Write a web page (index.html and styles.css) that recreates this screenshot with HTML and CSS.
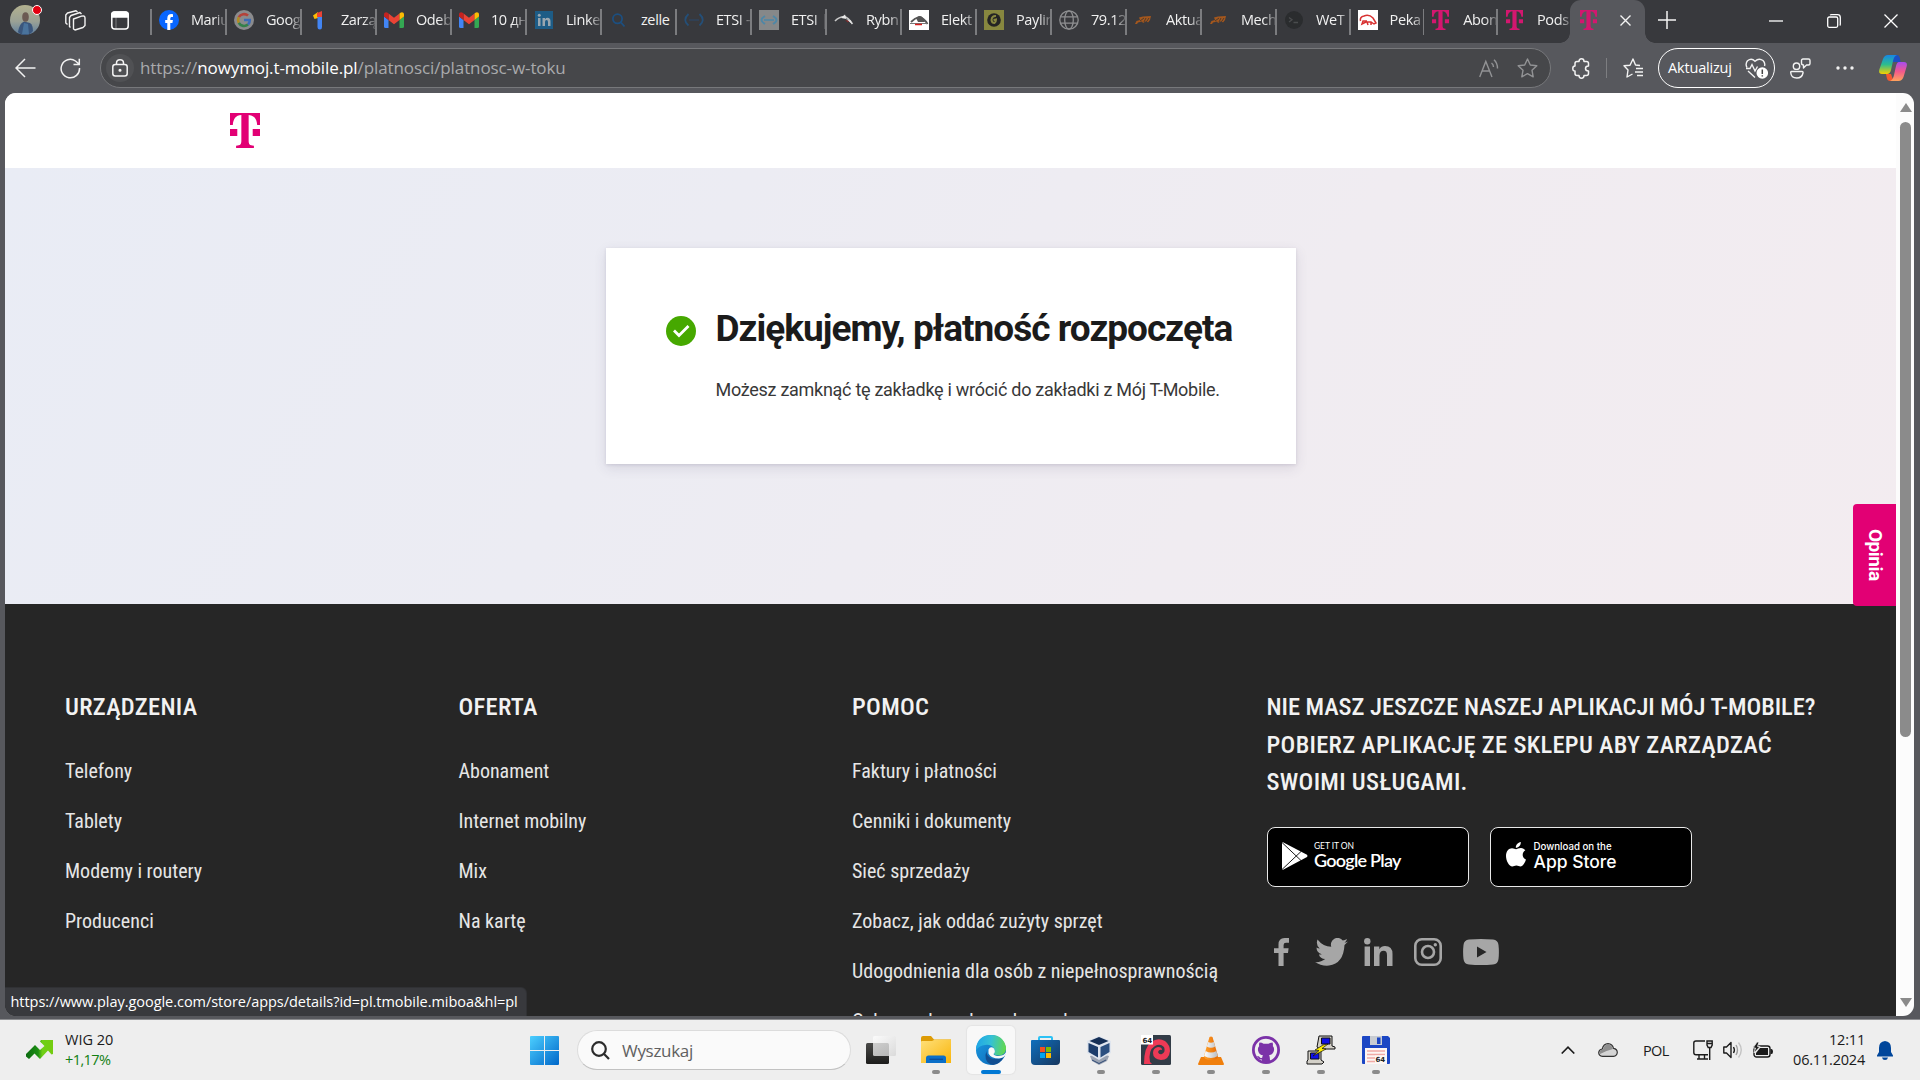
FILE: index.html
```html
<!DOCTYPE html>
<html lang="pl">
<head>
<meta charset="utf-8">
<title>Mój T-Mobile – płatność w toku</title>
<link rel="stylesheet" href="styles.css">
</head>
<body>
<svg class="defs" aria-hidden="true">
  <defs>
    <symbol id="tlogo" viewBox="0 0 74 105" preserveAspectRatio="none"><path d="M0 0H74V36H67C66 18 60 7 46 6V82C46 94 48 98 59 98V105H15V98C26 98 28 94 28 82V6C14 7 8 18 7 36H0ZM0 48H18V69H0ZM56 48H74V69H56Z"/></symbol>
    <symbol id="gmail" viewBox="0 0 20 16"><path fill="#4285f4" d="M1.5 16H4.5V8L0 4.5V14.5Q0 16 1.5 16Z"/><path fill="#34a853" d="M15.500 16H18.500Q20 16 20 14.500V4.500L15.500 8Z"/><path fill="#ea4335" d="M4.500 8V1.500L10 5.700 15.500 1.500V8L10 12.200Z"/><path fill="#c5221f" d="M0 2.500V4.500L4.500 8V1.500L3.600.8C2 -.4 0 .6 0 2.500Z"/><path fill="#fbbc04" d="M20 2.500V4.500L15.500 8V1.500L16.400.8C18 -.4 20 .6 20 2.500Z"/></symbol>
    <symbol id="ikar" viewBox="0 0 20 12"><path fill="#a4571d" d="M5 3.500L9 2.500 17 2 16 6 14 8.500 12.500 7 9 9 8 7.500 4 8.500 3 10H1L2.500 7 6 6Z"/><path stroke="#4d3a2c" stroke-width="1" d="M6 7L10 4M10 8L12 4M13 7L15 4"/></symbol>
    <linearGradient id="win" x1="0" y1="0" x2="1" y2="1"><stop offset="0" stop-color="#4ccfff"/><stop offset="1" stop-color="#0067c9"/></linearGradient>
    <linearGradient id="fold" x1="0" y1="0" x2="1" y2="1"><stop offset="0" stop-color="#ffe07a"/><stop offset="1" stop-color="#f9b50b"/></linearGradient>
    <linearGradient id="tv1" x1="0" y1="0" x2="0" y2="1"><stop offset="0" stop-color="#4a4a48"/><stop offset="1" stop-color="#1c1c1b"/></linearGradient>
    <linearGradient id="tv2" x1="0" y1="0" x2="1" y2="1"><stop offset="0" stop-color="#fff" stop-opacity=".75"/><stop offset="1" stop-color="#d5d5d5" stop-opacity=".8"/></linearGradient>
    <linearGradient id="edgeA" x1="0" y1=".3" x2="1" y2=".4"><stop offset="0" stop-color="#1fa5e8"/><stop offset=".5" stop-color="#35c1d4"/><stop offset="1" stop-color="#62d84e"/></linearGradient>
    <linearGradient id="edgeB" x1="0" y1="0" x2="1" y2="1"><stop offset="0" stop-color="#1b9de2"/><stop offset="1" stop-color="#0b62b4"/></linearGradient>
    <linearGradient id="store" x1="0" y1="0" x2="1" y2="1"><stop offset="0" stop-color="#0f6fbd"/><stop offset="1" stop-color="#17375f"/></linearGradient>
    <linearGradient id="cone" x1="0" y1="0" x2="1" y2="0"><stop offset="0" stop-color="#ffa22b"/><stop offset="1" stop-color="#e66a05"/></linearGradient>
    <linearGradient id="steel" x1="0" y1="0" x2="1" y2="0"><stop offset="0" stop-color="#fff"/><stop offset="1" stop-color="#b9bcc0"/></linearGradient>
    <linearGradient id="copA" x1="0" y1="0" x2="0" y2="1"><stop offset="0" stop-color="#1687e6"/><stop offset=".5" stop-color="#2dbd8e"/><stop offset="1" stop-color="#f5d000"/></linearGradient>
    <linearGradient id="copB" x1="0" y1="0" x2="0" y2="1"><stop offset="0" stop-color="#a64cf0"/><stop offset=".5" stop-color="#f2598c"/><stop offset="1" stop-color="#ffa35c"/></linearGradient>
    <linearGradient id="face" x1="0" y1="0" x2="0" y2="1"><stop offset="0" stop-color="#b3b18f"/><stop offset=".55" stop-color="#9aa195"/><stop offset="1" stop-color="#5e7fa0"/></linearGradient>
    <linearGradient id="trend" x1="0" y1="0" x2="1" y2="0"><stop offset="0" stop-color="#0b6a10"/><stop offset=".45" stop-color="#1d8f14"/><stop offset=".6" stop-color="#6fcf16"/><stop offset="1" stop-color="#74cc10"/></linearGradient>
  </defs>
</svg>

<div class="browser">
  <header class="tabbar">
    <div class="tools">
      <span class="avatar">
        <svg width="30" height="30" viewBox="0 0 30 30"><circle cx="15" cy="15" r="15" fill="url(#face)"/><path fill="#3a567c" d="M8 27Q9 19 14 16.500L20 18Q23 20 23 26 20 30 15 30 10 30 8 27Z"/><ellipse cx="15.500" cy="12" rx="3.300" ry="4.700" fill="#6b5a52"/><path fill="#4a739c" d="M12 29L14 18 18 19 19 29Z"/></svg>
        <i class="dot"></i>
      </span>
      <svg class="ws" width="21" height="21" viewBox="0 0 21 21" fill="none" stroke="#f2f2f2" stroke-width="1.400" stroke-linejoin="round"><path d="M8.500 9L16.500 6.200Q20 5.200 20 8V15.500L18 17.500 10 20 8.500 19ZM5.500 17.500L4.500 16.500V7.500L6 5.500 15 2.500 16.500 4M2.500 14.500L.8 13V5L2.500 3 11 .8 12.500 2"/></svg>
      <svg class="ta" width="18" height="19" viewBox="0 0 18 19" fill="none" stroke="#fff" stroke-width="1.500"><rect x=".8" y="1" width="16.400" height="17" rx="3"/><path d="M.8 3.500Q1 1 3.500 1H14.500Q17 1 17.200 3.500V6H.8Z" fill="#fff"/><path d="M5 6V18" stroke-width="1" opacity=".35"/></svg>
    </div>
    <div class="tabs">
      <div class="tab"><svg width="20" height="20" viewBox="0 0 20 20"><circle cx="10" cy="10" r="10" fill="#0866ff"/><path fill="#fff" d="M8.300 20V13H6.200V10H8.300V8.600C8.300 5.400 9.700 4 12.700 4L14 4.200V6.900H12.900C11.700 6.900 11.300 7.500 11.300 8.700V10H13.900L13.400 13H11.300V20Z"/></svg><span>Mariu</span></div>
      <div class="tab"><svg width="20" height="20" viewBox="0 0 20 20"><circle cx="10" cy="10" r="10" fill="#8b8b8d"/><g fill="none" stroke-width="2.600"><path stroke="#b4423a" d="M4.800 7.200A6 6 0 0 1 14 5.600"/><path stroke="#b08b22" d="M4.800 12.800A6 6 0 0 1 4.800 7.200"/><path stroke="#34804a" d="M14 14.500A6 6 0 0 1 4.800 12.800"/><path stroke="#3c6cb8" d="M10 10H15.800A6 6 0 0 1 14 14.500"/></g></svg><span>Goog</span></div>
      <div class="tab"><svg width="20" height="20" viewBox="0 0 20 20"><path fill="#fbbc04" d="M4 5.500L9 2V8L5.500 9Z"/><path fill="#ea4335" d="M8 3L13 1V7H8Z"/><path fill="#4285f4" d="M8.500 7H13V17Q13 19.500 11 19.500 8.500 19.500 8.500 17Z"/></svg><span>Zarzą</span></div>
      <div class="tab"><svg width="20" height="16"><use href="#gmail"/></svg><span>Odeb</span></div>
      <div class="tab"><svg width="20" height="16"><use href="#gmail"/></svg><span>10 дн</span></div>
      <div class="tab"><svg width="20" height="20" viewBox="0 0 20 20"><rect x="1" y="1" width="18" height="18" fill="#1d5c86"/><g fill="#98a6b0"><path d="M4 8H6.500V16H4ZM8.500 8H11V9.200Q12 7.800 13.600 7.800 16.500 7.800 16.500 11.500V16H14V12Q14 10 12.600 10 11 10 11 12V16H8.500Z"/><circle cx="5.250" cy="5.300" r="1.500"/></g></svg><span>Linke</span></div>
      <div class="tab"><svg width="20" height="20" viewBox="0 0 20 20" fill="none" stroke="#1c4f80" stroke-width="1.800"><circle cx="8.500" cy="8.800" r="4.600"/><path d="M12 12.500L15.500 16.500"/></svg><span class="full">zelle</span></div>
      <div class="tab"><svg width="20" height="20" viewBox="0 0 20 20" fill="none" stroke="#244f78" stroke-width="1.800"><path d="M4.500 4Q-2 10 4.500 15.500M15.500 4Q22 10 15.500 15.500"/><path d="M5 10H15" stroke="#2c4664" stroke-width="1.200"/></svg><span>ETSI -</span></div>
      <div class="tab"><svg width="20" height="20" viewBox="0 0 20 20"><rect width="20" height="20" fill="#868889"/><path fill="none" stroke="#4f87a6" stroke-width="2" d="M6 6Q-1 10 6 14M14 6Q21 10 14 14"/><path stroke="#4f87a6" stroke-width="1.600" d="M5 10H15"/></svg><span>ETSI |</span></div>
      <div class="tab"><svg width="20" height="20" viewBox="0 0 20 20"><path fill="none" stroke="#c9c9c9" stroke-width="1.600" d="M1 11Q5 7 10 6.500 14 7 18.500 14"/><path fill="#e8e8e8" d="M7 8L11 4.500 12.500 9ZM12 9L17 10.500 18 14Z"/><path fill="#8c2929" d="M11 10L15 11 14 12.500Z"/></svg><span>Rybn</span></div>
      <div class="tab"><svg width="20" height="20" viewBox="0 0 20 20"><rect width="20" height="20" fill="#fff"/><path fill="none" stroke="#565656" stroke-width="1.800" d="M2 12Q6 8 10 7 15 8 18.500 14"/><path fill="#555" d="M7 8Q11 4 14 8L16 12H9Z"/><path stroke="#777" d="M1 13.500H18"/><path stroke="#d62020" stroke-width="1.500" d="M6 14.500H13"/></svg><span>Elekt</span></div>
      <div class="tab"><svg width="20" height="20" viewBox="0 0 20 20"><rect width="20" height="20" fill="#87873f"/><circle cx="10" cy="10" r="6.800" fill="#242424"/><path fill="none" stroke="#87873f" stroke-width="2" d="M12 6Q8 5.500 7.500 10 8 13 10.500 13 12 12 12 9.500L9.500 10"/></svg><span>Paylin</span></div>
      <div class="tab"><svg width="20" height="20" viewBox="0 0 20 20" fill="none" stroke="#8e8f91" stroke-width="1.300"><circle cx="10" cy="10" r="9.200"/><ellipse cx="10" cy="10" rx="4.300" ry="9.200"/><path d="M1.500 6.800H18.500M1.500 13.200H18.500"/></svg><span>79.12</span></div>
      <div class="tab"><svg width="20" height="12"><use href="#ikar"/></svg><span>Aktua</span></div>
      <div class="tab"><svg width="20" height="12"><use href="#ikar"/></svg><span>Mech</span></div>
      <div class="tab slim"><svg width="20" height="20" viewBox="0 0 20 20"><circle cx="10" cy="10" r="9" fill="#2a2c2e"/><path fill="none" stroke="#4a4c4e" stroke-width="1.300" d="M5 7.500L8 9.800 5 12M9.500 12.500H14"/></svg><span>WeT</span></div>
      <div class="tab slim"><svg width="20" height="20" viewBox="0 0 20 20"><rect width="20" height="20" fill="#fff"/><path fill="none" stroke="#d83232" stroke-width="1.500" d="M2.500 11Q1.500 7 6 6 11 4 15 8L18 13 16 14 13 12H8L4 14 5 11H9M9 12L10 15M13 12V15"/></svg><span>Peka</span></div>
      <div class="tab slim"><svg class="fav-t" width="17" height="20"><use href="#tlogo"/></svg><span>Abon</span></div>
      <div class="tab slim"><svg class="fav-t" width="17" height="20"><use href="#tlogo"/></svg><span>Pods</span></div>
      <div class="tab active"><svg class="fav-t" width="17" height="20"><use href="#tlogo"/></svg><svg class="close" width="11" height="11" viewBox="0 0 11 11" stroke="#f4f4f4" stroke-width="1.400"><path d="M.5.5L10.500 10.500M10.500.5L.5 10.500"/></svg></div>
    </div>
    <svg class="plus" width="18" height="18" viewBox="0 0 18 18" stroke="#f4f4f4" stroke-width="1.500"><path d="M9 0V18M0 9H18"/></svg>
    <div class="winctl">
      <svg width="14" height="14" viewBox="0 0 14 14" stroke="#fff" stroke-width="1.300"><path d="M0 7H14"/></svg>
      <svg width="14" height="14" viewBox="0 0 14 14" fill="none" stroke="#fff" stroke-width="1.300"><rect x=".7" y="3" width="10" height="10.300" rx="1.500"/><path d="M3 1Q3.500.7 4.500.7H10.500Q13.300.7 13.300 3.500V10Q13.300 11 12.800 11.500"/></svg>
      <svg width="14" height="14" viewBox="0 0 14 14" stroke="#fff" stroke-width="1.300"><path d="M.5.5L13.500 13.500M13.500.5L.5 13.500"/></svg>
    </div>
  </header>

  <nav class="toolbar">
    <svg class="back" width="21" height="20" viewBox="0 0 21 20" fill="none" stroke="#f2f2f2" stroke-width="1.500"><path d="M20.500 10H1M10 1L1 10 10 19"/></svg>
    <svg class="reload" width="21" height="21" viewBox="0 0 21 21" fill="none" stroke="#f2f2f2" stroke-width="1.500"><path d="M19.500 10A9.200 9.200 0 1 1 15.500 3L19 6M19.300 .8V6.500H13.500"/></svg>
    <div class="address">
      <span class="lock"><svg width="16" height="18" viewBox="0 0 16 18" fill="none" stroke="#f4f4f4" stroke-width="1.500"><rect x=".8" y="5.500" width="14.400" height="11.500" rx="2.500"/><path d="M4.500 5.500V4Q4.500.8 8 .8T11.500 4V5.500"/><circle cx="8" cy="11.200" r=".8" fill="#fff"/></svg></span>
      <span class="url">https://<b>nowymoj.t-mobile.pl</b>/platnosci/platnosc-w-toku</span>
      <svg class="read" width="20" height="19" viewBox="0 0 20 19" fill="none" stroke="#929395" stroke-width="1.400"><path d="M.7 18L6.800 2.500 13 18M3 12H10.800M12.500 4Q14.500 5.500 14.500 8M15 .8Q18.500 4 18.500 9.500"/></svg>
      <svg class="star" width="21" height="20" viewBox="0 0 21 20" fill="none" stroke="#929395" stroke-width="1.400" stroke-linejoin="round"><path d="M10.500 1L13.300 7 19.800 7.800 15 12.300 16.200 18.800 10.500 15.600 4.800 18.800 6 12.300 1.200 7.800 7.700 7Z"/></svg>
    </div>
    <svg class="ext" width="19" height="21" viewBox="0 0 19 21" fill="none" stroke="#f2f2f2" stroke-width="1.500" stroke-linejoin="round"><path d="M5 3.500H7Q7 .8 9.500.8T12 3.500H14.500Q16.500 3.500 16.500 5.500V8Q13.500 8 13.500 10.500T16.500 13V15.500Q16.500 17.500 14.500 17.500H12Q12 20.200 9.500 20.200T7 17.500H5Q3 17.500 3 15.500V13Q.8 13 .8 10.500T3 8V5.500Q3 3.500 5 3.500Z"/></svg>
    <i class="sep"></i>
    <svg class="favs" width="20" height="20" viewBox="0 0 20 20" fill="none" stroke="#f2f2f2" stroke-width="1.400" stroke-linejoin="round"><path d="M17 7.500L12.500 7 10 1 7 7.200 1 7.800 5 12 4 19 9.500 16M13 10.500H20M12 14H20M14 17.500H20"/></svg>
    <div class="pill">Aktualizuj
      <svg width="23" height="21" viewBox="0 0 23 21" fill="none" stroke="#f2f2f2" stroke-width="1.400"><path d="M2 9.500Q0 6 2.500 2.800 6.500-.5 10 3.200 14-.5 18 2.500 20.500 5 19.500 8M3 13L10 19.500M1 10.500H5L7 6.500 10 13 12.500 8.500"/><circle cx="17.300" cy="15" r="5.800" fill="#fff" stroke="none"/><path stroke="#444" stroke-width="1.500" d="M17.300 11.500V16M17.300 17.200V18.600"/></svg>
    </div>
    <svg class="people" width="21" height="21" viewBox="0 0 21 21" fill="none" stroke="#f2f2f2" stroke-width="1.400" stroke-linejoin="round"><circle cx="6.500" cy="8.200" r="3.200"/><path d="M1.500 13.500H12Q13.300 13.500 13 15 12 20 6.800 20 1.200 20 .8 15 .5 13.500 1.500 13.500ZM11.500 2.500Q11.500 1 13 1H18.500Q20 1 20 2.500V5.500Q20 7 18.500 7H16.500L13.500 10V7Q11.500 7 11.500 5Z"/></svg>
    <svg class="dots" width="18" height="4" viewBox="0 0 18 4" fill="#f2f2f2"><circle cx="2" cy="2" r="1.700"/><circle cx="9" cy="2" r="1.700"/><circle cx="16" cy="2" r="1.700"/></svg>
    <svg class="copilot" width="28" height="26" viewBox="0 0 28 26"><path fill="#1b4fc4" d="M14 0H18Q20 0 20.800 3L21.500 7H17L13 7Z"/><path fill="#f4582f" d="M7 19H12L14.500 26H11Q8.500 26 7.800 23Z"/><path fill="url(#copA)" d="M9 0H18Q15 1 14 6L12 15Q11 19 8 19H3Q-1 19 .5 14L4 4Q5.500 0 9 0Z"/><path fill="url(#copB)" d="M20 7H25Q29 7 27.500 12L24.500 22Q23 26 19.500 26H11Q14 25 15 20L17 11Q18 7 20 7Z"/></svg>
  </nav>

  <div class="viewport">
    <main class="page">
      <div class="brand"><svg width="30" height="35"><use href="#tlogo"/></svg></div>
      <section class="hero">
        <div class="card">
          <svg class="ok" width="30" height="30" viewBox="0 0 30 30"><circle cx="15" cy="15" r="15" fill="#46a800"/><path fill="none" stroke="#fff" stroke-width="2.800" d="M8 14.500L13 19.500 22.500 10"/></svg>
          <div>
            <h1>Dziękujemy, płatność rozpoczęta</h1>
            <p>Możesz zamknąć tę zakładkę i wrócić do zakładki z Mój T-Mobile.</p>
          </div>
        </div>
      </section>
      <footer class="footer">
        <div class="col"><h2>URZĄDZENIA</h2><a>Telefony</a><a>Tablety</a><a>Modemy i routery</a><a>Producenci</a></div>
        <div class="col"><h2>OFERTA</h2><a>Abonament</a><a>Internet mobilny</a><a>Mix</a><a>Na kartę</a></div>
        <div class="col"><h2>POMOC</h2><a>Faktury i płatności</a><a>Cenniki i dokumenty</a><a>Sieć sprzedaży</a><a>Zobacz, jak oddać zużyty sprzęt</a><a>Udogodnienia dla osób z niepełnosprawnością</a><a>Ochrona danych osobowych</a></div>
        <div class="app">
          <h2><span class="tight">NIE MASZ JESZCZE NASZEJ APLIKACJI MÓJ T-MOBILE?</span><br>POBIERZ APLIKACJĘ ZE SKLEPU ABY ZARZĄDZAĆ<br>SWOIMI USŁUGAMI.</h2>
          <div class="badges">
            <div class="badge gp"><svg width="26" height="28" viewBox="0 0 26 28"><path fill="#fff" d="M0 .8Q0 0 1 .3L25 12.800Q26 14 25 15L1 27.700Q0 28 0 27Z"/><path stroke="#000" stroke-width=".9" d="M0 .5L19 18.500M0 27.500L19 9.500"/></svg><div><small>GET IT ON</small><strong>Google Play</strong></div></div>
            <div class="badge as"><svg width="20" height="25" viewBox="0 0 20 25" fill="#fff"><path d="M10 7.200C11.200 7.200 12.500 6 15 6 16.800 6 18.400 7 19.300 8.300 15.500 10.600 16 16 20 17.600 19 20.500 17 24.500 14.500 24.500 13 24.500 12.300 23.600 10.400 23.600S7.700 24.500 6.300 24.500C3.200 24.500 0 18.800 0 14 0 9 3 6.300 6 6.300 7.800 6.300 9 7.200 10 7.200Z"/><path d="M9.800 5.800C9.600 3 12 .4 14.800 0 15 3 12.700 5.800 9.800 5.800Z"/></svg><div><small>Download on the</small><strong>App Store</strong></div></div>
          </div>
          <div class="social">
            <svg width="16" height="28" viewBox="0 0 16 28"><path d="M4.500 28V15H0V10.300H4.500V6.500Q4.500 0 10.500 0H15V4.800H12Q9.600 4.800 9.600 7V10.300H14.600L14 15H9.600V28Z"/></svg>
            <svg width="33" height="28" viewBox="0 0 33 28"><path d="M33 3.500Q31.500 4.500 29.500 4.700 31.500 3.300 32 1 30 2.200 27.800 2.600A6.600 6.600 0 0 0 16.300 8.800Q8 8.500 2.500 1.400 .5 6.800 4.700 10.500 3 10.500 1.500 9.500 1.500 14.600 6.800 16.300 5.300 16.700 3.900 16.400 5.200 20.700 10.200 21 6 24.500 0 24.100 6.200 28.300 14 27.600 28.500 25.600 29.500 7Z"/></svg>
            <svg width="29" height="28" viewBox="0 0 29 28"><circle cx="3.300" cy="3.200" r="3.200"/><path d="M.6 8.500H6V28H.6ZM10 8.500H15.300V11.200Q17.200 8 21 8 28.500 8 28.500 16V28H23V17.200Q23 12.800 19.700 12.800 15.500 12.800 15.500 17.500V28H10Z"/></svg>
            <svg width="28" height="28" viewBox="0 0 28 28" fill="none" stroke="#a6a6a6" stroke-width="2.600"><rect x="1.300" y="1.300" width="25.400" height="25.400" rx="6.500"/><circle cx="14" cy="14" r="6"/><circle cx="21.300" cy="6.700" r="1.700" fill="#a6a6a6" stroke="none"/></svg>
            <svg width="36" height="26" viewBox="0 0 36 26"><path fill-rule="evenodd" d="M6 .5Q18-.5 30 .5 35 1 35.500 6 36.300 13 35.500 20 35 25 30 25.500 18 26.500 6 25.500 1 25 .5 20-.3 13 .5 6 1 1 6 .5ZM14 7.500V18.500L23.500 13Z"/></svg>
          </div>
        </div>
      </footer>
      <div class="opinia">Opinia</div>
    </main>
    <aside class="scroll"><i class="up"></i><i class="thumb"></i><i class="down"></i></aside>
    <div class="status">https://www.play.google.com/store/apps/details?id=pl.tmobile.miboa&amp;hl=pl</div>
  </div>
</div>

<div class="taskbar">
  <div class="widget">
    <svg width="28" height="20" viewBox="0 0 28 20"><path fill="url(#trend)" d="M0 14L9 5 14 10 18.500 6 14 1.500 15 0H27V14L25.500 14.500 22 10.500 14 19 8.500 13.500 3 19 0 16.500Z"/></svg>
    <div>WIG 20<br><em>+1,17%</em></div>
  </div>
  <div class="apps">
    <svg class="start" width="29" height="29" viewBox="0 0 29 29" fill="url(#win)"><path d="M1 0H14V14H0V1Q0 0 1 0ZM15 0H28Q29 0 29 1V14H15ZM0 15H14V29H1Q0 29 0 28ZM15 15H29V28Q29 29 28 29H15Z"/></svg>
    <div class="search"><svg width="19" height="19" viewBox="0 0 19 19" fill="none" stroke="#2b2b2b" stroke-width="2.200"><circle cx="8" cy="8" r="6.800"/><path d="M12.800 12.800L18 18"/></svg>Wyszukaj</div>
    <div class="ico off"><svg width="30" height="28" viewBox="0 0 30 28"><rect y="7" width="23" height="21" rx="1.500" fill="url(#tv1)"/><rect x="7" width="23" height="20" rx="1.500" fill="url(#tv2)"/></svg></div>
    <div class="ico"><svg width="30" height="28" viewBox="0 0 30 28"><path fill="#dd9b05" d="M0 2Q0 0 2 0H10L13 3.500H30V10H0Z"/><path fill="url(#fold)" d="M0 6Q0 5 1 5H11L14 3.500H30V27H0Z"/><path fill="#0a6fc8" d="M5 27V22Q5 19.500 7.500 19.500H22.500Q25 19.500 25 22V27Z"/><path stroke="#0b4c98" stroke-width="1.300" d="M8.500 23.300H22"/></svg></div>
    <div class="ico current"><svg width="30" height="30" viewBox="0 0 30 30"><circle cx="15" cy="15" r="15" fill="url(#edgeB)"/><path fill="url(#edgeA)" d="M0 13Q2 0 15.500 0 27 0 30 12 30.500 19 24.500 20.500 20 21 17.500 19 20 17 18 13.500 15 9 9 10 3.500 10.500 0 15Z"/><path fill="#124f92" d="M10.500 16Q10 21 15.500 23.500 21 25 27.500 22.500 24 29 17 30 9 28 9.500 20Z"/><path fill="#f8f8f8" d="M12.500 14.500Q14.500 10.500 18 13.500 20 17 17.500 19 18.500 21 23 21 28 20.500 30 17.500V19Q28 23 23 23.500 15 23.500 12.500 18.500Z"/></svg></div>
    <div class="ico off"><svg width="29" height="29" viewBox="0 0 29 29"><path fill="none" stroke="#2bc1f5" stroke-width="2" d="M8 6V2Q8 1 9 1H20Q21 1 21 2V6"/><path fill="url(#store)" d="M0 5Q0 4 1 4H28Q29 4 29 5V25Q29 29 25 29H4Q0 29 0 25Z"/><path fill="#f25022" d="M9 11H14V16H9Z"/><path fill="#7fba00" d="M15 11H20V16H15Z"/><path fill="#00a4ef" d="M9 17H14V22H9Z"/><path fill="#ffb900" d="M15 17H20V22H15Z"/></svg></div>
    <div class="ico vb"><svg width="26" height="30" viewBox="0 0 26 30"><path fill="#9aa3b2" d="M4 21L13 18 23 21 21 26 13 30 6 26Z"/><path fill="#dfe5ee" d="M13 1L25 6V18L13 25 1 18V6Z"/><path fill="#152f56" d="M13 2L22.500 6 13 10 3.500 6Z"/><path fill="#1b3c6b" d="M2.500 8L12 12V22.500L2.500 17Z"/><path fill="#2c5080" d="M14.500 12L23.500 8V17L14.500 22.500Z"/><path fill="none" stroke="#304a75" d="M6 25L13 28.500 20 25"/></svg></div>
    <div class="ico"><svg width="30" height="30" viewBox="0 0 30 30"><rect width="30" height="30" rx="1.500" fill="#323c47"/><path fill="#ed3a56" d="M3 29Q3 12 10 7 17 2 24 6 29 10 29 16 28 25 20 25 12 24 12 18 12 13 17 12 21 12 21 15 18 14 17 17 18 20 21 19 25 17 23 12 19 8 14 11 7 15 9 27L11 29Z"/><rect width="12" height="9.500" fill="#fff"/><text x="1.500" y="7.800" class="mini">64</text></svg></div>
    <div class="ico"><svg width="26" height="29" viewBox="0 0 26 29"><path fill="#f07f0c" d="M3 21H23L26 28Q26 29 25 29H1Q0 29 0 28Z"/><path fill="url(#cone)" d="M11.500 1Q13 0 14.500 1L20 20Q20 24 13 24T6 20Z"/><path fill="url(#steel)" d="M10.200 6Q13 7.500 15.800 6L17.200 10.500Q13 13 8.800 10.500ZM7.600 15Q13 18 18.400 15L19.800 20Q13 24 6.200 20Z"/></svg></div>
    <div class="ico"><svg width="28" height="28" viewBox="0 0 28 28"><circle cx="14" cy="14" r="12.600" fill="#eee" stroke="#7b32a8" stroke-width="2.800"/><path fill="#7b32a8" d="M7.500 6.500Q10 6.500 11.500 7.800H16.500Q18 6.500 20.500 6.500 21.300 8.500 20.800 10 23 12.500 21.500 16 20.200 19 17 19.300 18 20.500 18 26H10V23.500Q7 24 6 21.500L5 20Q7 19.500 8 21.500 9 22.500 10.300 21.500 10.300 20 11 19.300 7.500 19 6.500 16 5 12.500 7.200 10 6.700 8.500 7.500 6.500Z"/></svg></div>
    <div class="ico"><svg width="30" height="30" viewBox="0 0 30 30"><g stroke="#111" stroke-width="1"><path fill="#d3d0c8" d="M13 1H26V11L29 12V14H14L11 12ZM2 16H15V25L18 27 16 29H1V26L2 25Z"/><path fill="#1010e8" d="M15.500 3H24V9H15.500ZM4.500 18H13V24H4.500Z"/><path fill="#ffee00" d="M17 10L9 15 13 15.500 7 21 20 14 16 13.500 22 9Z" stroke-width=".7"/></g></svg></div>
    <div class="ico"><svg width="28" height="28" viewBox="0 0 28 28"><path fill="#1b46c4" d="M1 0H26L28 2V27Q28 28 27 28H1Q0 28 0 27V1Q0 0 1 0Z"/><path fill="#c8ccd2" d="M8 0H20V9H8Z"/><path fill="#1b46c4" d="M15 1.500H18.500V8H15Z"/><path fill="#fdf6f4" d="M3 12H25V28H3Z"/><path stroke="#f0a9a5" stroke-width="1.300" d="M5 15H23M5 18.500H23M5 22H13M5 25.500H13"/><rect x="13" y="19.500" width="10" height="7" fill="#fdf6f4"/><text x="13.500" y="25.800" class="mini">64</text></svg></div>
  </div>
  <div class="tray">
    <svg class="chev" width="14" height="8" viewBox="0 0 14 8" fill="none" stroke="#1b1b1b" stroke-width="1.600"><path d="M.7 7.500L7 1.200 13.300 7.500"/></svg>
    <svg class="cloud" width="20" height="14" viewBox="0 0 20 14"><path fill="#d5d5d5" stroke="#333" stroke-width="1.200" d="M4.500 13.300Q.7 13 .7 9.500 1 6.500 4.300 6 5.500 .8 10 .7 14.500 1 15.500 5.300 19.300 6 19.300 9.500 19 13 15.500 13.300Z"/><path fill="#8e8e8e" d="M1.500 9.500Q2 6.800 5 6.600 6 1.500 10 1.400 14 1.500 15 6L8.500 8 2 11Z"/></svg>
    <span class="lang">POL</span>
    <svg class="net" width="20" height="20" viewBox="0 0 20 20" fill="none" stroke="#1b1b1b" stroke-width="1.400"><path d="M12 1H3Q.8 1 .8 3V12.500Q.8 14.700 3 14.700H15M6 15V19M11.500 15V19M4 19H15M14 1H19.200V5L18 7.500H15.200L14 5ZM14 3.500H19M16.700 7.500V20"/></svg>
    <svg class="vol" width="20" height="18" viewBox="0 0 20 18" fill="none" stroke="#1b1b1b" stroke-width="1.400"><path d="M.8 6H3.500L8 1.500V16.500L3.500 12H.8Z" stroke-linejoin="round"/><path d="M10.500 6Q12.300 9 10.500 12"/><path stroke="#9d9d9d" d="M13 4Q16 9 13 14"/><path stroke="#c4c4c4" d="M15.500 1.500Q21 9 15.500 16.500"/></svg>
    <svg class="bat" width="20" height="16" viewBox="0 0 20 16"><rect x="1" y="4" width="16" height="11" rx="2.500" fill="none" stroke="#1b1b1b" stroke-width="1.400"/><path fill="#1b1b1b" d="M7 6H15V13H3V11ZM17.500 7H18.500Q20 7 20 9.500T18.500 12H17.500Z"/><path fill="#1b1b1b" stroke="#eee" stroke-width=".8" d="M4 0L0 6H2.500L1 11 7 4.500H4.500L6 0Z"/></svg>
    <div class="clock">12:11<br>06.11.2024</div>
    <svg class="bell" width="16" height="19" viewBox="0 0 16 19" fill="#00469b"><path d="M8 0Q14 .5 14 7V11L16 14.500V15.500H0V14.500L2 11V7Q2 .5 8 0ZM5 16.500H11Q10.500 19 8 19T5 16.500Z"/></svg>
  </div>
</div>
</body>
</html>
```
FILE: styles.css
```css
* { box-sizing: border-box; }
html, body { margin: 0; height: 100%; overflow: hidden; }
body { display: flex; flex-direction: column; font-family: "Open Sans", "Noto Sans", sans-serif; background: #57585d; }
svg { display: block; flex: none; }
.defs { position: absolute; width: 0; height: 0; }

.browser { height: 1020px; display: flex; flex-direction: column; background: #57585d; border-bottom: 1px solid #8c8d90; }

/* Tab strip */
.tabbar { height: 43px; display: flex; background: #38393d; color: #f1f1f1; }
.tools { width: 150.400px; display: flex; align-items: flex-start; padding: 5px 0 0 10px; }
.avatar { position: relative; width: 30px; height: 30px; }
.dot { position: absolute; right: -2px; top: 0; width: 10px; height: 10px; border-radius: 50%; background: #e3000f; border: 1px solid #fff; }
.ws { margin: 5px 0 0 25px; }
.ta { margin: 5.500px 0 0 25px; }
.tabs { display: flex; }
.tab { width: 75px; height: 40px; display: flex; align-items: center; padding-left: 8.500px; position: relative; font-size: 14.500px; line-height: 20px; }
.tab.slim { width: 73.700px; }
.tab::before { content: ""; position: absolute; left: 0; top: 9px; width: 1.500px; height: 26px; background: #7b7c7f; }
.tab > svg { width: 20px; }
.tab span { margin: 0 0 1px 12px; width: 34px; overflow: hidden; white-space: nowrap; letter-spacing: -.35px; -webkit-mask-image: linear-gradient(90deg, #000 66%, rgba(0,0,0,.25)); mask-image: linear-gradient(90deg, #000 66%, rgba(0,0,0,.25)); }
.tab span.full { -webkit-mask-image: none; mask-image: none; }
.tab > .fav-t { width: 17px; margin: 0 2px 0 1px; fill: #d3176f; }
.tab.active { width: 75px; height: 43px; padding-bottom: 3px; background: #57585d; border-radius: 11px 11px 0 0; }
.tab.active::before, .tab.active::after { top: auto; bottom: 0; width: 10px; height: 10px; background: radial-gradient(circle at 0 0, transparent 9.500px, #57585d 10px); }
.tab.active::before { left: -10px; }
.tab.active::after { content: ""; position: absolute; right: -10px; transform: scaleX(-1); }
.tab > .close { width: 11px; margin-left: 21.500px; }
.plus { margin: 11px 0 0 13px; }
.winctl { margin: 14px 22px 0 auto; display: flex; gap: 43.500px; }

/* Toolbar */
.toolbar { height: 50px; display: flex; align-items: center; padding: 0 13px 0 15px; color: #fff; }
.reload { margin-left: 24px; }
.address { margin-left: 19px; width: 1451px; height: 40px; border: 1.500px solid #77787b; border-radius: 20px; background: #46474a; display: flex; align-items: center; padding: 0 12px 0 5px; }
.lock { width: 28px; height: 28px; border-radius: 50%; background: #505154; display: grid; place-items: center; }
.url { margin: 0 0 2px 6px; font-size: 17px; letter-spacing: -.1px; color: #a9aaac; white-space: nowrap; }
.url b { font-weight: 400; color: #fff; }
.read { margin-left: auto; }
.star { margin-left: 18px; }
.ext { margin-left: 21px; }
.sep { margin-left: 15px; width: 1px; height: 20px; background: #7d7e81; }
.favs { margin-left: 16px; }
.pill { margin-left: 15px; width: 117px; height: 40px; border: 1.500px solid #fff; border-radius: 20px; display: flex; align-items: center; justify-content: space-between; padding: 0 6px 0 9px; font-size: 14.500px; letter-spacing: -.18px; line-height: 20px; }
.people { margin-left: 15px; }
.dots { margin-left: 25px; }
.copilot { margin-left: auto; }

/* Page area */
.viewport { position: relative; margin: 0 6px 0 5px; height: 923px; display: flex; border-radius: 11px; overflow: hidden; background: #fcfcfc; }
.page { position: relative; width: 1891px; display: flex; flex-direction: column; overflow: hidden; }
.brand { height: 75px; flex: none; background: #fff; padding: 20px 0 0 225px; fill: #e20074; }
.hero { height: 436px; flex: none; padding-top: 80px; display: flex; justify-content: center; align-items: flex-start; background: linear-gradient(120deg, #e9ecf5 0%, #ececf3 35%, #f0ecf1 65%, #f3ecf0 100%); }
.card { width: 690px; height: 216px; display: flex; gap: 20px; padding: 58px 0 0 60px; background: #fff; box-shadow: 0 4px 12px rgba(60,50,90,.12), 0 1px 3px rgba(60,50,90,.12); }
.ok { margin-top: 10px; }
h1 { margin: 1px 0 0; font: 700 37px/44px Roboto, sans-serif; letter-spacing: -.97px; color: #1b1b1b; white-space: nowrap; }
.card p { margin: 25px 0 0; font: 400 18px/28px Roboto, sans-serif; letter-spacing: -.28px; color: #383838; white-space: nowrap; }

.footer { flex: 1; min-height: 0; overflow: hidden; display: grid; grid-template-columns: 393.500px 393.500px 414.500px 1fr; padding: 84px 0 0 60px; background: #262626; color: #f2f2f2; font-family: Roboto, sans-serif; font-stretch: 75%; }
.footer h2 { margin: 0 0 20px; font-size: 24.500px; line-height: 37.500px; font-weight: 500; letter-spacing: .3px; white-space: nowrap; }
.footer .tight { letter-spacing: -.04px; }
.col { display: flex; flex-direction: column; }
.col a { font-size: 20px; line-height: 50px; font-weight: 400; white-space: nowrap; color: #e6e6e6; }
.app h2 { margin-bottom: 26px; }
.badges { display: flex; gap: 21px; }
.badge { width: 202px; height: 60px; display: flex; background: #000; border: 1.500px solid #e8e8e8; border-radius: 8px; color: #fff; white-space: nowrap; font-stretch: 100%; }
.badge small, .badge strong { display: block; }
.gp { padding: 14px 0 0 14px; gap: 6.500px; font-family: Lato, sans-serif; }
.gp small { font-size: 8.500px; line-height: 8px; letter-spacing: -.1px; }
.gp strong { font-size: 18px; line-height: 21px; font-weight: 600; letter-spacing: -.75px; }
.as { padding: 14px 0 0 15px; gap: 8px; font-family: Inter, sans-serif; }
.as small { font-size: 9.700px; line-height: 10px; font-weight: 500; }
.as strong { font-size: 17.500px; line-height: 19px; font-weight: 500; }
.social { display: flex; align-items: center; margin-top: 51px; padding-left: 7px; fill: #a6a6a6; }
.social svg:nth-child(2) { margin-left: 25px; }
.social svg:nth-child(3) { margin-left: 16.500px; }
.social svg:nth-child(4) { margin-left: 20.500px; }
.social svg:nth-child(5) { margin-left: 21px; }

.opinia { position: absolute; right: 0; top: 411px; width: 43px; height: 102px; border-radius: 4px 0 0 4px; background: #e20074; color: #fff; writing-mode: vertical-rl; text-align: center; padding-right: 1px; font: 700 19px/39px Roboto, sans-serif; letter-spacing: -.5px; }

.scroll { width: 18px; display: flex; flex-direction: column; align-items: center; padding: 10px 3px 9px 4px; }
.up { border: 6px solid transparent; border-top: 0; border-bottom: 9px solid #8b8b8b; }
.thumb { margin-top: 10px; width: 11px; height: 615px; border-radius: 6px; background: #8b8b8b; }
.down { margin-top: auto; border: 6px solid transparent; border-bottom: 0; border-top: 9px solid #8b8b8b; }
.status { position: absolute; left: 0; bottom: 0; width: 521px; height: 28px; padding-left: 5.500px; background: #38393d; color: #fff; border-radius: 0 5px 0 11px; font-size: 14.500px; line-height: 27px; letter-spacing: -.04px; white-space: nowrap; box-shadow: 0 0 0 1px #303134; }

/* Taskbar */
.taskbar { height: 60px; display: flex; align-items: center; background: #eee; color: #1b1b1b; }
.widget { width: 530px; display: flex; gap: 11px; align-items: center; padding-left: 26px; font-size: 14.500px; line-height: 20px; }
.widget em { font-style: normal; color: #128012; letter-spacing: -.6px; }
.apps { display: flex; align-items: center; height: 60px; }
.search { margin: 0 6px 0 17.500px; width: 274px; height: 40px; display: flex; align-items: center; gap: 12.500px; padding-left: 13px; border: 1px solid #dcdcdc; border-bottom-color: #c2c2c2; border-radius: 20px; background: #fafafa; color: #606060; font-size: 17px; letter-spacing: -.3px; }
.ico { position: relative; width: 48px; height: 48px; margin-right: 7px; display: grid; place-items: center; border-radius: 5px; }
.ico::after { content: ""; position: absolute; bottom: 0; left: 20px; width: 8px; height: 4px; border-radius: 2px; background: #8a8a8a; }
.ico.off::after { display: none; }
.ico.current { background: #f8f8f8; box-shadow: 0 0 1px 1px #e4e4e4; }
.ico.current::after { left: 14px; width: 20px; background: #0078d4; }
.ico.vb { padding-right: 3px; }
.mini { font: 700 7px "DejaVu Sans", sans-serif; fill: #222; }
.tray { margin-left: auto; display: flex; align-items: center; padding-right: 27px; font-size: 14.500px; letter-spacing: -.2px; }
.cloud { margin-left: 23px; }
.lang { margin-left: 25px; width: 26px; letter-spacing: -.6px; }
.net { margin-left: 24px; }
.vol { margin-left: 10px; }
.bat { margin-left: 10px; }
.clock { width: 92px; text-align: right; line-height: 20px; }
.bell { margin-left: 12px; }
```
